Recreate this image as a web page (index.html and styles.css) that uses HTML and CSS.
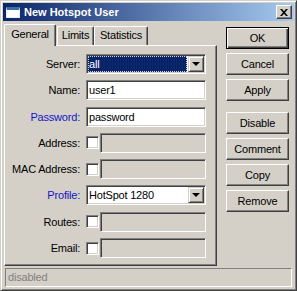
FILE: index.html
```html
<!DOCTYPE html>
<html lang="en">
<head>
  <meta charset="UTF-8" />
  <title>New Hotspot User</title>
  <link rel="stylesheet" href="styles.css">
</head>
<body>
  <div class="window">
    <div class="titlebar">
      <span class="app-icon"></span>
      <span class="title">New Hotspot User</span>
      <span class="close">
        <svg width="8" height="7" viewBox="0 0 8 7"><path d="M0 0h2l2 2.3L6 0h2L5 3.5 8 7H6L4 4.7 2 7H0l3-3.5z" fill="#000"/></svg>
      </span>
    </div>

    <div class="main">
      <div class="left">
        <div class="tabs">
          <div class="tab active">General</div>
          <div class="tab limits">Limits</div>
          <div class="tab stats">Statistics</div>
        </div>
        <div class="panel">
          <div class="form">
            <label>Server:</label>
            <div class="field select">
              <span class="sel-text focused">all</span>
              <span class="drop"><i></i></span>
            </div>

            <label>Name:</label>
            <div class="field">user1</div>

            <label class="blue">Password:</label>
            <div class="field">password</div>

            <label>Address:</label>
            <div class="check-row"><span class="checkbox"></span><span class="field off"></span></div>

            <label>MAC Address:</label>
            <div class="check-row"><span class="checkbox"></span><span class="field off"></span></div>

            <label class="blue">Profile:</label>
            <div class="field select">
              <span class="sel-text">HotSpot 1280</span>
              <span class="drop"><i></i></span>
            </div>

            <label>Routes:</label>
            <div class="check-row"><span class="checkbox"></span><span class="field off"></span></div>

            <label>Email:</label>
            <div class="check-row"><span class="checkbox"></span><span class="field off"></span></div>
          </div>
        </div>
      </div>

      <div class="buttons">
        <div class="btn default">OK</div>
        <div class="btn">Cancel</div>
        <div class="btn">Apply</div>
        <div class="btn sep">Disable</div>
        <div class="btn">Comment</div>
        <div class="btn">Copy</div>
        <div class="btn">Remove</div>
      </div>
    </div>

    <div class="status">disabled</div>
  </div>
</body>
</html>
```

FILE: styles.css
```css
body {
  margin: 0;
  font-family: 'Liberation Sans', Arial, sans-serif;
  font-size: 11px;
  letter-spacing: -0.2px;
  color: #000;
  background: #d4d0c8;
}

.window {
  width: 297px;
  height: 291px;
  box-sizing: border-box;
  border: 1px solid;
  border-color: #d4d0c8 #404040 #404040 #d4d0c8;
  box-shadow: inset 1px 1px #fff, inset -1px -1px #808080;
  padding: 2px;
  background: #d4d0c8;
  display: flex;
  flex-direction: column;
}

.titlebar {
  height: 18px;
  flex: none;
  display: flex;
  align-items: center;
  background: linear-gradient(to right, #0a246a, #a6caf0);
}

.app-icon {
  width: 14px;
  height: 11px;
  margin-left: 3px;
  box-sizing: border-box;
  background: #fff;
  border: 1px solid #e8eef8;
  border-top: 3px solid #3a6ea5;
}

.title {
  margin-left: 4px;
  color: #fff;
  font-weight: bold;
  font-size: 11px;
  letter-spacing: 0;
  flex: 1;
}

.close {
  width: 16px;
  height: 14px;
  margin-right: 2px;
  box-sizing: border-box;
  display: flex;
  align-items: center;
  justify-content: center;
  background: #d4d0c8;
  border: 1px solid;
  border-color: #fff #404040 #404040 #fff;
  box-shadow: inset -1px -1px #808080;
}

.main {
  display: flex;
  height: 242px;
  margin: 3px 0 0 1px;
  flex: none;
}

.left {
  width: 213px;
}

.tabs {
  display: flex;
  align-items: flex-end;
  height: 21px;
}

.tab {
  height: 19px;
  box-sizing: border-box;
  line-height: 17px;
  text-align: center;
  border: 1px solid;
  border-bottom: none;
  border-color: #fff #404040 #fff #fff;
  box-shadow: inset -1px 0 #808080;
  border-radius: 2px 2px 0 0;
}

.tab.active {
  width: 52px;
  height: 22px;
  margin-bottom: -1px;
  line-height: 19px;
  position: relative;
  z-index: 1;
  background: #d4d0c8;
}

.tab.limits {
  width: 37px;
  margin-left: 1px;
}

.tab.stats {
  width: 54px;
}

.panel {
  height: 221px;
  box-sizing: border-box;
  border: 1px solid;
  border-color: #fff #404040 #404040 #fff;
  box-shadow: inset -1px -1px #808080;
  padding-top: 8px;
}

.form {
  display: grid;
  grid-template-columns: 75px 120px;
  grid-auto-rows: 20px;
  column-gap: 6px;
  row-gap: 6.3px;
}

.form label {
  text-align: right;
  line-height: 20px;
}

.form label.blue {
  color: #1414c8;
}

.field {
  height: 20px;
  box-sizing: border-box;
  border: 1px solid;
  border-color: #808080 #fff #fff #808080;
  box-shadow: inset 1px 1px #404040, inset -1px -1px #d4d0c8;
  background: #fff;
  padding-left: 2px;
  line-height: 18px;
  white-space: nowrap;
}

.field.off {
  flex: 1;
  background: #d4d0c8;
  margin-left: 1px;
}

.check-row {
  display: flex;
  align-items: center;
}

.checkbox {
  width: 13px;
  height: 13px;
  box-sizing: border-box;
  border: 1px solid;
  border-color: #808080 #fff #fff #808080;
  box-shadow: inset 1px 1px #404040, inset -1px -1px #d4d0c8;
  background: #fff;
}

.select {
  display: flex;
  padding: 1px;
}

.sel-text {
  flex: 1;
  padding-left: 1px;
  line-height: 16px;
}

.sel-text.focused {
  background: #0a246a;
  color: #fff;
  outline: 1px dotted #d4d0c8;
  outline-offset: -1px;
  margin-right: 1px;
}

.drop {
  width: 16px;
  height: 16px;
  box-sizing: border-box;
  display: flex;
  align-items: center;
  justify-content: center;
  background: #d4d0c8;
  border: 1px solid;
  border-color: #d4d0c8 #404040 #404040 #d4d0c8;
  box-shadow: inset 1px 1px #fff, inset -1px -1px #808080;
}

.drop i {
  width: 0;
  height: 0;
  border-left: 4px solid transparent;
  border-right: 4px solid transparent;
  border-top: 4px solid #000;
}

.buttons {
  margin: 3px 0 0 9px;
  display: flex;
  flex-direction: column;
  gap: 4px;
}

.btn {
  width: 63px;
  height: 22px;
  box-sizing: border-box;
  text-align: center;
  line-height: 20px;
  border: 1px solid;
  border-color: #fff #404040 #404040 #fff;
  box-shadow: inset -1px -1px #808080;
}

.btn.default {
  border-color: #000;
  box-shadow: inset 1px 1px #fff, inset -1px -1px #404040, inset -2px -2px #808080;
}

.btn.sep {
  margin-top: 7px;
}

.status {
  height: 19px;
  flex: none;
  box-sizing: border-box;
  margin: 2px 2px 1px;
  border: 1px solid;
  border-color: #808080 #fff #fff #808080;
  color: #808080;
  padding-left: 2px;
  line-height: 17px;
}
```
